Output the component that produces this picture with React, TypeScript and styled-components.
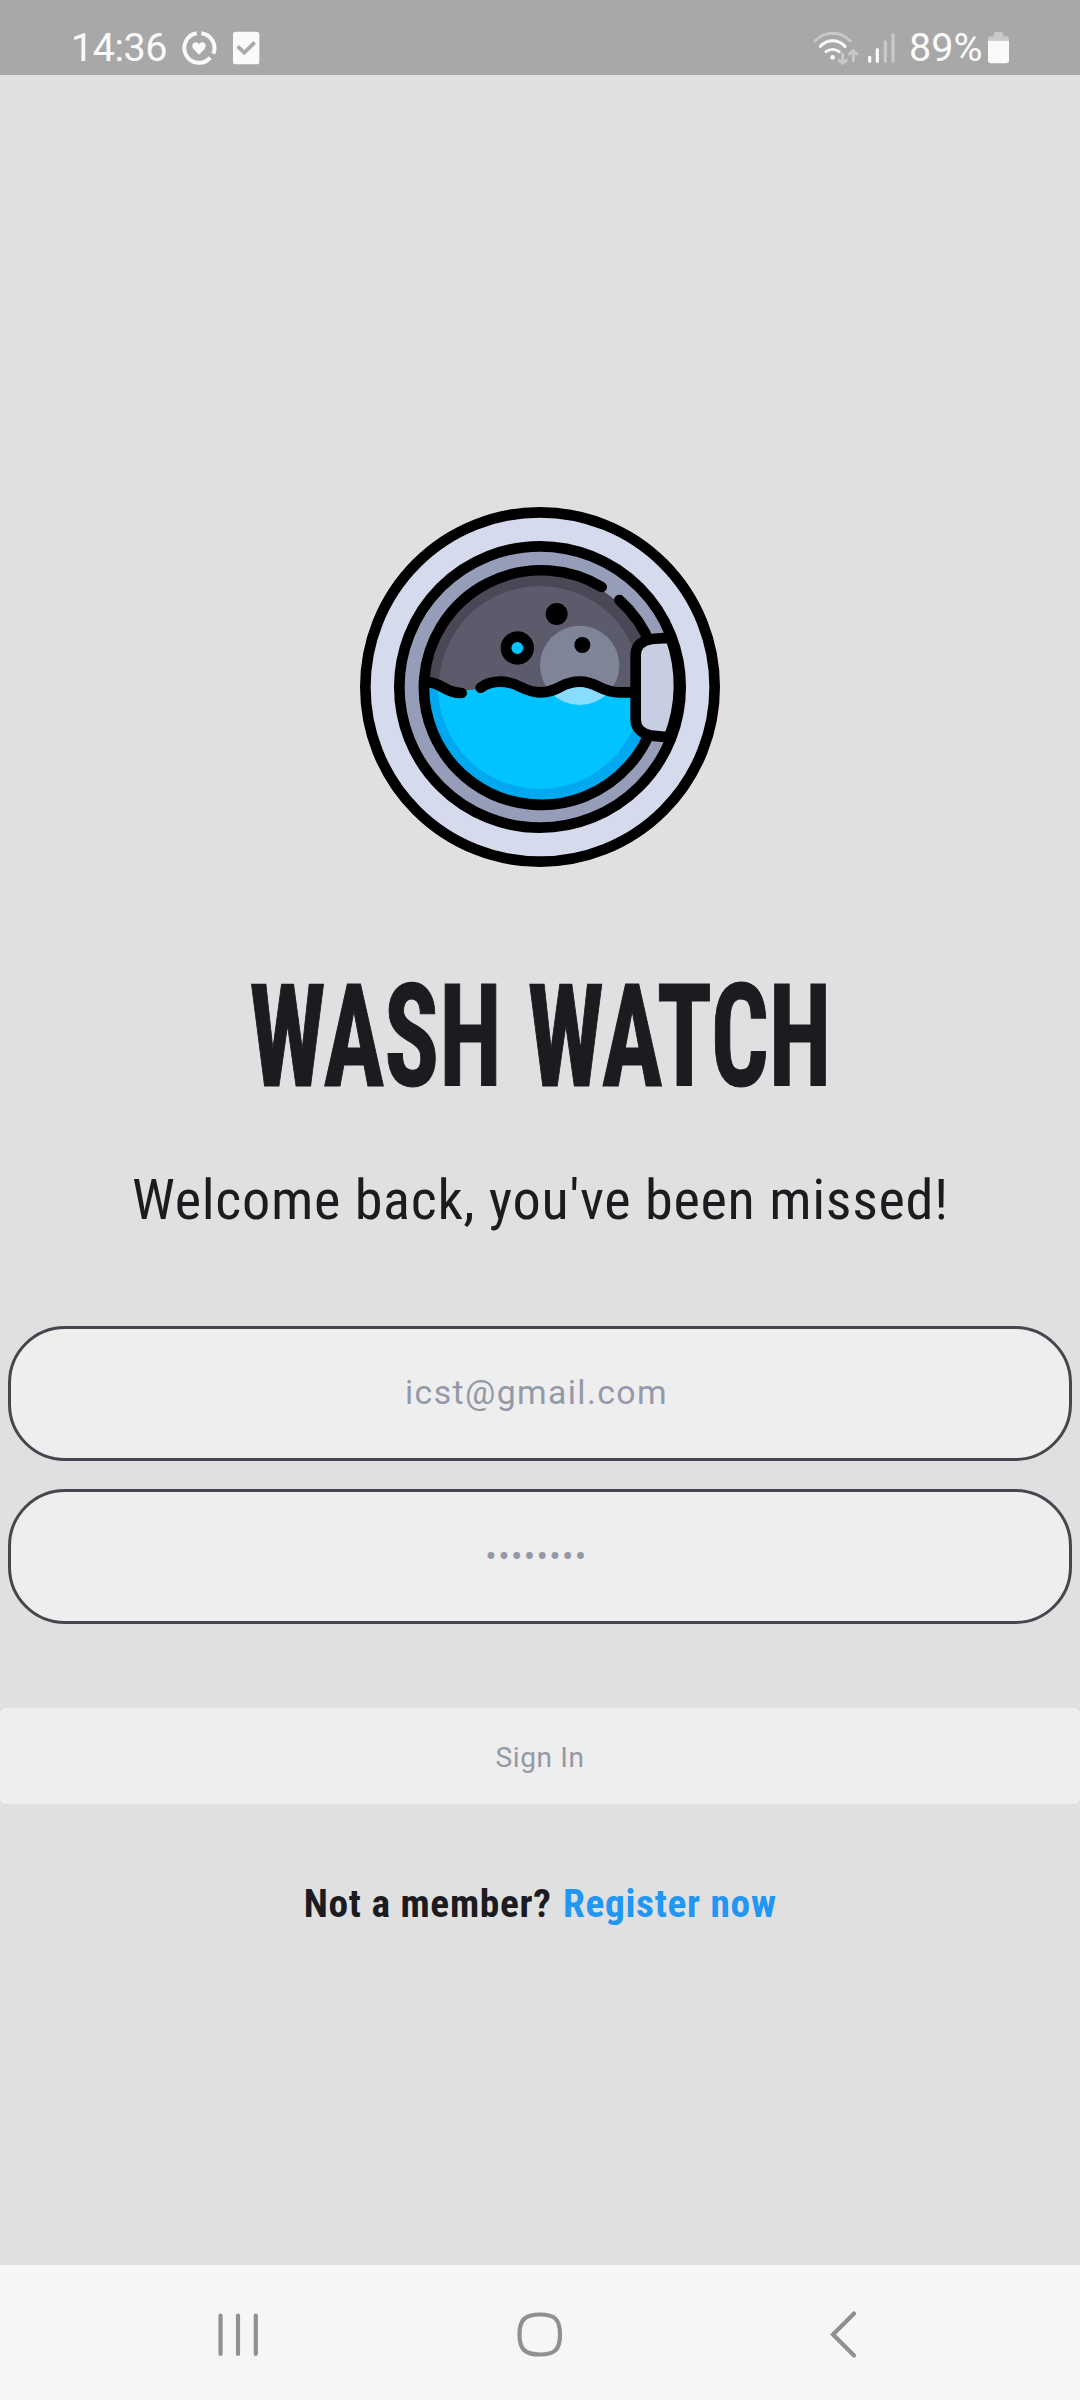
import React from "react";
import styled, { createGlobalStyle } from "styled-components";

const GlobalStyle = createGlobalStyle`
  * { box-sizing: border-box; }
  body { margin: 0; background: #e0e0e0; }
`;

const Screen = styled.div`
  display: flex;
  flex-direction: column;
  width: 1080px;
  height: 2400px;
  overflow: hidden;
  background: #e0e0e0;
  color: #1c1b1f;
  font-family: Roboto, "Liberation Sans", sans-serif;
`;

const StatusBar = styled.header`
  display: flex;
  justify-content: space-between;
  height: 75px;
  padding: 20px 71px 0 71px;
  background: #a8a8a8;
  color: #fafafa;
`;

const StatusGroup = styled.div`
  display: flex;
  align-items: flex-start;
`;

const StatusText = styled.span<{ $width: number; $indent?: number; $tracking?: number }>`
  width: ${(p) => p.$width}px;
  padding-left: ${(p) => p.$indent ?? 0}px;
  font-size: 39.5px;
  line-height: 55px;
  letter-spacing: ${(p) => p.$tracking ?? 0}px;
  white-space: nowrap;
`;

const StatusIcon = styled.svg<{ $gap?: number }>`
  display: block;
  flex: none;
  margin: 10px 0 0 ${(p) => p.$gap ?? 0}px;
`;

const Main = styled.main`
  flex: 1;
  display: flex;
  flex-direction: column;
  align-items: center;
  padding-top: 432px;
`;

const Logo = styled.svg`
  display: block;
  width: 360px;
  height: 360px;
`;

const Title = styled.h1`
  margin: 100px 0 0;
  height: 140px;
  font-family: "Roboto Condensed", Roboto, sans-serif;
  font-size: 143px;
  font-weight: 700;
  line-height: 141px;
  word-spacing: 3px;
  white-space: nowrap;
  -webkit-text-stroke: 1.2px #1c1b1f;
  transform: scaleX(0.713);
`;

const Welcome = styled.p`
  margin: 60px 0 0;
  font-family: "Roboto Condensed", Roboto, sans-serif;
  font-size: 56.25px;
  line-height: 66px;
  letter-spacing: 0.7px;
  text-indent: 0.7px;
  white-space: nowrap;
`;

const Form = styled.form`
  display: flex;
  flex-direction: column;
  gap: 28px;
  width: 100%;
  margin-top: 93px;
`;

const Field = styled.div<{ $lift?: number }>`
  display: flex;
  align-items: center;
  justify-content: center;
  height: 135px;
  margin: 0 8px;
  padding: 0 7px ${(p) => p.$lift ?? 0}px 0;
  border: 3px solid #49454f;
  border-radius: 57px;
  background: #eeeeee;
  color: #9499a8;
  font-size: 33.75px;
  letter-spacing: 1.4px;
`;

const SignIn = styled.button`
  height: 96px;
  margin-top: 56px;
  padding: 2px 0 0;
  border: 0;
  border-radius: 6px;
  background: #eeeeee;
  color: #9499a8;
  font-family: inherit;
  font-size: 28.125px;
  letter-spacing: 0.6px;
`;

const Footer = styled.p`
  display: flex;
  gap: 11px;
  margin: 77px 0 0;
  font-family: "Roboto Condensed", Roboto, sans-serif;
  font-size: 39.4px;
  font-weight: 700;
  line-height: 46px;
  letter-spacing: 0.7px;
  text-indent: 0.3px;
  white-space: nowrap;
`;

const Register = styled.span`
  color: #2196f3;
`;

const NavBar = styled.nav`
  display: flex;
  align-items: center;
  justify-content: space-between;
  height: 135px;
  padding: 0 222px 0 216px;
  background: #f6f6f6;
`;

const NavIcon = styled.svg<{ $after?: number }>`
  display: block;
  margin-right: ${(p) => p.$after ?? 0}px;
  fill: none;
  stroke: #909090;
  stroke-width: 4.2;
  stroke-linecap: round;
`;

const WasherLogo = () => (
  <Logo viewBox="30 36 1080 1080" fill="none" stroke="#000" strokeWidth="32" strokeLinecap="round">
    <defs>
      <clipPath id="water">
        <path d="M200 562H225C265 562 280 592 335 590C350 582 370 588 390 578C405 568 425 560 452 560C510 560 515 592 570 592C630 592 630 560 689 560C745 560 750 592 808 592H930V940H200Z" />
      </clipPath>
    </defs>
    <circle cx="570" cy="576" r="524" fill="#d5dbed" />
    <circle cx="570" cy="576" r="422" fill="#969db8" />
    <g stroke="none">
      <circle cx="570" cy="576" r="345" fill="#4a4857" />
      <circle cx="570" cy="576" r="303" fill="#5b5b6c" />
      <circle cx="689" cy="511" r="119" fill="#7f8497" />
      <g clipPath="url(#water)">
        <circle cx="570" cy="576" r="345" fill="#00a8f0" />
        <circle cx="570" cy="576" r="306" fill="#00c3ff" />
        <circle cx="689" cy="511" r="119" fill="#87dcff" />
      </g>
    </g>
    <path d="M808 315A352 352 0 1 1 755 276" />
    <path d="M232 562C274 560 282 594 335 594" />
    <path d="M392 578C405 568 425 560 452 560C510 560 515 592 570 592C630 592 630 560 689 560C745 560 750 592 808 592H850" />
    <path d="M962 428L905 432C878 436 857 450 857 480V675C857 700 878 717 905 722L957 727A422 422 0 0 0 962 428Z" fill="#c7cee2" />
    <circle cx="620" cy="357" r="33" fill="#000" stroke="none" />
    <circle cx="697" cy="450" r="24" fill="#000" stroke="none" />
    <circle cx="502" cy="459" r="34" fill="#00c3ff" />
  </Logo>
);

const HealthIcon = () => (
  <StatusIcon $gap={14.3} width="36" height="36" viewBox="424 88 108 108">
    <g fill="none" stroke="#fafafa" strokeWidth="12">
      <path d="M485 98A44.5 44.5 0 0 1 521 159" />
      <path d="M512 171A44.5 44.5 0 1 1 471 98" />
    </g>
    <path
      d="M478 162L462 146C454 136 459 125 468 125C473 125 476 127 478 131C480 127 483 125 488 125C497 125 502 136 494 146Z"
      fill="#fafafa"
    />
  </StatusIcon>
);

const TaskIcon = () => (
  <StatusIcon $gap={15} width="28" height="36" viewBox="577 88 84 108">
    <rect x="580" y="93" width="79" height="98" rx="8" fill="#fafafa" />
    <path d="M594 137L614 156L645 125" fill="none" stroke="#a8a8a8" strokeWidth="11" />
  </StatusIcon>
);

const WifiIcon = () => (
  <StatusIcon width="46" height="36" viewBox="69 88 138 108" fill="none" stroke="#fafafa" strokeWidth="9" strokeLinecap="round">
    <path d="M75 121C105 90 151 90 181 121" stroke="#c8c8c8" />
    <path d="M91 137C113 115 143 115 165 137" />
    <path d="M108 153C120 144 136 144 148 153" />
    <circle cx="128" cy="170" r="7" fill="#fafafa" stroke="none" />
    <path d="M158 160V187M147 179L158 188L169 179M190 180V151M178 160L190 150L201 160" stroke="#c8c8c8" />
  </StatusIcon>
);

const SignalIcon = () => (
  <StatusIcon $gap={8} width="30" height="36" viewBox="231 88 90 108" strokeWidth="10" strokeLinecap="round">
    <path d="M239 170V182M262 147V182" stroke="#fafafa" />
    <path d="M286 124V182M309 103V182" stroke="#c8c8c8" />
  </StatusIcon>
);

const BatteryIcon = () => (
  <StatusIcon width="21" height="36" viewBox="594 88 63 108">
    <path d="M594 120V115Q594 107 602 107H611V101Q611 94 618 94H633Q640 94 640 101V107H649Q657 107 657 115V120Z" fill="#c8c8c8" />
    <path d="M594 120H657V179Q657 188 648 188H603Q594 188 594 179Z" fill="#fafafa" />
  </StatusIcon>
);

export default function App() {
  return (
    <>
      <GlobalStyle />
      <Screen>
        <StatusBar>
          <StatusGroup>
            <StatusText $width={96} $tracking={-0.5}>14:36</StatusText>
            <HealthIcon />
            <TaskIcon />
          </StatusGroup>
          <StatusGroup>
            <WifiIcon />
            <SignalIcon />
            <StatusText $width={91} $indent={12}>89%</StatusText>
            <BatteryIcon />
          </StatusGroup>
        </StatusBar>
        <Main>
          <WasherLogo />
          <Title>WASH WATCH</Title>
          <Welcome>Welcome back, you've been missed!</Welcome>
          <Form>
            <Field $lift={2}>icst@gmail.com</Field>
            <Field>••••••••</Field>
            <SignIn type="button">Sign In</SignIn>
          </Form>
          <Footer>
            <span>Not a member?</span>
            <Register>Register now</Register>
          </Footer>
        </Main>
        <NavBar>
          <NavIcon width="44" height="48" viewBox="216 2308.5 44 48">
            <path d="M220.500 2315V2353.500M238 2315V2353.500M255.800 2315V2353.500" />
          </NavIcon>
          <NavIcon $after={8} width="48" height="48" viewBox="516 2308.5 48 48">
            <path d="M540 2314C555 2314 560 2319 560 2334C560 2349 555 2354 540 2354C525 2354 519.500 2349 519.500 2334C519.500 2319 525 2314 540 2314Z" />
          </NavIcon>
          <NavIcon width="30" height="50" viewBox="828 2307.5 30 50">
            <path d="M854 2313L833 2334L854 2355" />
          </NavIcon>
        </NavBar>
      </Screen>
    </>
  );
}
